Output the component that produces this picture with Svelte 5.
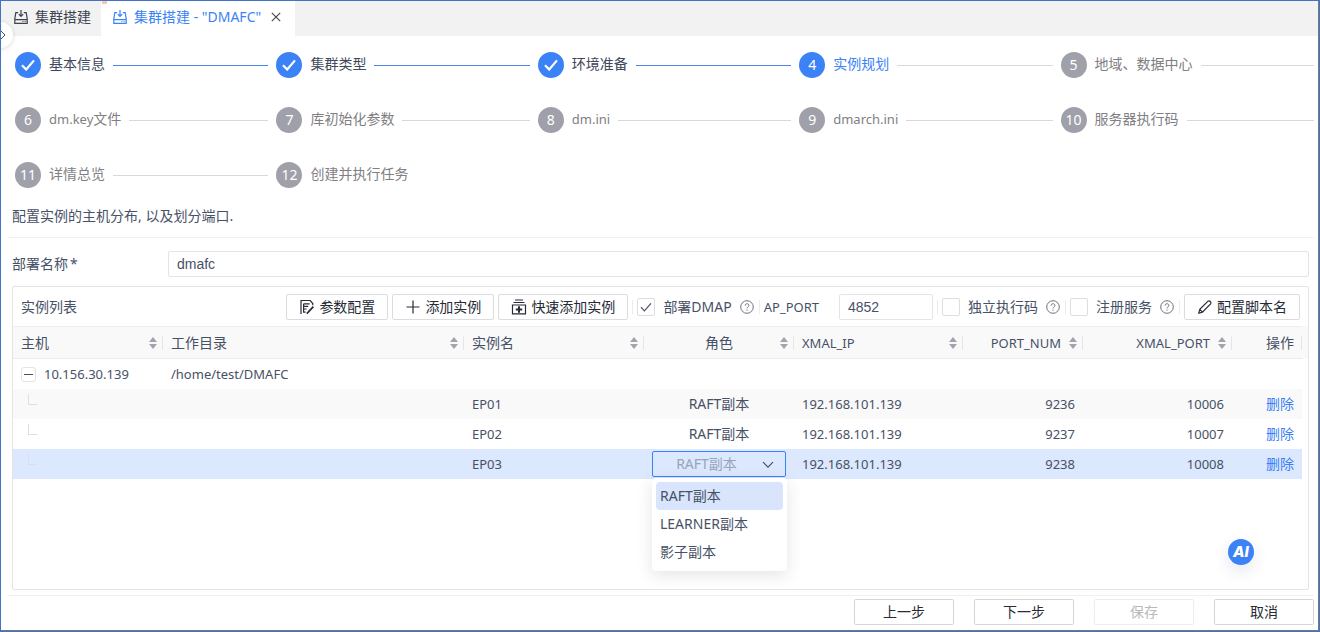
<script>
  const steps = [
    { label: '基本信息', state: 'done' },
    { label: '集群类型', state: 'done' },
    { label: '环境准备', state: 'done' },
    { label: '实例规划', state: 'current' },
    { label: '地域、数据中心', state: 'todo' },
    { prefix: 'dm.key', label: '文件', state: 'todo' },
    { label: '库初始化参数', state: 'todo' },
    { prefix: 'dm.ini', label: '', state: 'todo' },
    { prefix: 'dmarch.ini', label: '', state: 'todo' },
    { label: '服务器执行码', state: 'todo' },
    { label: '详情总览', state: 'todo' },
    { label: '创建并执行任务', state: 'todo' }
  ];

  const columns = [
    { label: '主机', cls: 'host', sort: true },
    { label: '工作目录', cls: 'dir', sort: true },
    { label: '实例名', cls: 'name', sort: true },
    { label: '角色', cls: 'role', sort: true },
    { label: 'XMAL_IP', cls: 'ip', sort: true, latin: true },
    { label: 'PORT_NUM', cls: 'port', sort: true, latin: true },
    { label: 'XMAL_PORT', cls: 'xport', sort: true, latin: true },
    { label: '操作', cls: 'op', sort: false }
  ];

  const roles = ['RAFT副本', 'LEARNER副本', '影子副本'];

  let rows = $state([
    { name: 'EP01', role: 'RAFT副本', ip: '192.168.101.139', port: 9236, xport: 10006 },
    { name: 'EP02', role: 'RAFT副本', ip: '192.168.101.139', port: 9237, xport: 10007 },
    { name: 'EP03', role: 'RAFT副本', ip: '192.168.101.139', port: 9238, xport: 10008 }
  ]);
  let editing = $state('EP03');
  let menuOpen = $state(true);
  let deployName = $state('dmafc');
  let apPort = $state('4852');
  let deployDmap = $state(true);
  let standalone = $state(false);
  let register = $state(false);

  function choose(row, role) {
    row.role = role;
    menuOpen = false;
  }

  function remove(event, name) {
    event.preventDefault();
    rows = rows.filter((r) => r.name !== name);
  }
</script>

{#snippet clusterIcon()}
  <svg class="tab-icon" viewBox="0 0 14 14" aria-hidden="true">
    <path d="M4.2 2.6H1.8L.8 8.8v4.5h12.4V8.8l-1-6.2H9.8M.8 9.6h12.4M7 0v6.2M4.8 4.2L7 6.4l2.2-2.2M8.4 11.5h1M10.6 11.5h1" />
  </svg>
{/snippet}

{#snippet help()}
  <svg class="help" viewBox="0 0 14 14" aria-hidden="true">
    <circle cx="7" cy="7" r="6.3" />
    <path d="M5.1 5.6c0-2.5 3.8-2.5 3.8-.1 0 1.4-1.9 1.4-1.9 2.9M7 9.6v1.1" />
  </svg>
{/snippet}

{#snippet tick()}
  <svg class="tick" viewBox="0 0 18 18" aria-hidden="true"><path d="M4 9.2l3.4 3.6L14 5.4" /></svg>
{/snippet}

<div class="frame">
  <div class="page">
    <nav class="tabs">
      <a class="tab" href="#cluster">{@render clusterIcon()}集群搭建</a>
      <a class="tab active" href="#dmafc">{@render clusterIcon()}集群搭建 - "DMAFC"</a>
      <button class="close" aria-label="关闭">
        <svg viewBox="0 0 10 10" aria-hidden="true"><path d="M.8.8l8.4 8.4M9.2.8L.8 9.2" /></svg>
      </button>
      <i class="mark"></i>
      <button class="expand" aria-label="展开">
        <svg viewBox="0 0 6 10" aria-hidden="true"><path d="M1 1l4 4-4 4" /></svg>
      </button>
    </nav>

    <ol class="steps">
      {#each steps as step, i}
        <li class={step.state}>
          <span class="dot">
            {#if step.state === 'done'}
              <svg viewBox="0 0 14 12" aria-hidden="true"><path d="M1 6.2l4.2 4.3L13 1.4" /></svg>
            {:else}{i + 1}{/if}
          </span>
          <span class="label">{#if step.prefix}<span class="latin">{step.prefix}</span>{/if}{step.label}</span>
          {#if i < steps.length - 1}<span class="line"></span>{/if}
        </li>
      {/each}
    </ol>

    <p class="intro">配置实例的主机分布, 以及划分端口.</p>

    <div class="field">
      <label for="deploy-name">部署名称<span class="star">*</span></label>
      <input id="deploy-name" type="text" bind:value={deployName} />
    </div>

    <section class="panel">
      <div class="toolbar">
        <h2>实例列表</h2>
        <button class="btn">
          <svg class="i16" viewBox="0 0 16 16" aria-hidden="true">
            <path d="M2 15V1.5h9.2l2.6 3v1.8M4.6 4.8h6M4.6 7.4h4.6M4.6 10h3M4.6 4.8v8.4h2" />
            <path class="mid" d="M14.4 7.6l-5.2 5.6-1.4 1.4" />
          </svg>参数配置
        </button>
        <button class="btn">
          <svg class="i16" viewBox="0 0 16 16" aria-hidden="true"><path d="M8 1.5v13M1.5 8h13" /></svg>添加实例
        </button>
        <button class="btn">
          <svg class="i16" viewBox="0 0 16 16" aria-hidden="true">
            <path d="M4 1h8M2.5 3.5h11M1.5 6h13v8.8h-13z" />
            <path class="thick" d="M8 7.3v6.4M4.8 10.5h6.4" />
          </svg>快速添加实例
        </button>
        <i class="sep"></i>
        <span class="check">
          <span class="box"><input id="dmap" type="checkbox" bind:checked={deployDmap} />{@render tick()}</span>
          <label for="dmap">部署DMAP</label>{@render help()}
        </span>
        <i class="sep"></i>
        <label class="port-label" for="ap-port">AP_PORT</label>
        <input id="ap-port" type="text" bind:value={apPort} />
        <i class="sep"></i>
        <span class="check">
          <span class="box"><input id="standalone" type="checkbox" bind:checked={standalone} />{@render tick()}</span>
          <label for="standalone">独立执行码</label>{@render help()}
        </span>
        <i class="sep"></i>
        <span class="check">
          <span class="box"><input id="register" type="checkbox" bind:checked={register} />{@render tick()}</span>
          <label for="register">注册服务</label>{@render help()}
        </span>
        <i class="sep"></i>
        <button class="btn">
          <svg class="i16" viewBox="0 0 16 16" aria-hidden="true">
            <path d="M1.8 14.2l1-3.8L11 2.2c1.4-1.2 3.8 1 2.6 2.6l-8.2 8.3zM2.8 10.4l2.6 2.7" />
          </svg>配置脚本名
        </button>
      </div>

      <div class="table-wrap">
        <table>
          <colgroup>
            {#each columns as c}<col class={c.cls} />{/each}
          </colgroup>
          <thead>
            <tr>
              {#each columns as c}
                <th class={c.cls} scope="col">
                  <div class="head">
                    <span class:latin={c.latin}>{c.label}</span>
                    {#if c.sort}
                      <svg class="sort" viewBox="0 0 8 12" aria-hidden="true"><path d="M4 0l4 5H0zM4 12l4-5H0z" /></svg>
                    {/if}
                  </div>
                </th>
              {/each}
            </tr>
          </thead>
          <tbody>
            <tr>
              <td class="latin">
                <div class="tree">
                  <button class="toggle" aria-label="折叠"></button>10.156.30.139
                </div>
              </td>
              <td class="latin">/home/test/DMAFC</td>
              <td></td><td></td><td></td><td></td><td></td><td></td>
            </tr>
            {#each rows as row, i}
              <tr class:striped={i % 2 === 0} class:selected={row.name === editing}>
                <td><i class="branch"></i></td>
                <td></td>
                <td class="latin">{row.name}</td>
                <td class="role">
                  {#if row.name === editing}
                    <div class="picker">
                      <select aria-label="角色" bind:value={row.role}>
                        {#each roles as role}<option>{role}</option>{/each}
                      </select>
                      <svg class="chevron" viewBox="0 0 12 8" aria-hidden="true"><path d="M1 1.2l5 5 5-5" /></svg>
                      {#if menuOpen}
                        <div class="menu">
                          {#each roles as role}
                            <button class:on={role === row.role} onclick={() => choose(row, role)}>{role}</button>
                          {/each}
                        </div>
                      {/if}
                    </div>
                  {:else}{row.role}{/if}
                </td>
                <td class="latin">{row.ip}</td>
                <td class="latin num">{row.port}</td>
                <td class="latin num">{row.xport}</td>
                <td class="num"><a href="#delete" onclick={(e) => remove(e, row.name)}>删除</a></td>
              </tr>
            {/each}
          </tbody>
        </table>
      </div>
    </section>

    <footer>
      <button>上一步</button>
      <button>下一步</button>
      <button disabled>保存</button>
      <button>取消</button>
    </footer>

    <button class="ai">AI</button>
  </div>
</div>

<style>
  :global(body) {
    margin: 0;
  }
  .frame,
  .frame * {
    box-sizing: border-box;
  }
  .frame {
    display: flex;
    min-height: 100vh;
    border: 1px solid #4472c4;
    font: 14px/20px 'Noto Sans', 'Noto Sans CJK SC', sans-serif;
    color: #475166;
    background: #fff;
  }
  .page {
    position: relative;
    flex: 1;
    min-width: 0;
    display: flex;
    flex-direction: column;
    border-right: 1px solid #77777c;
    border-bottom: 1px solid #77777c;
    overflow: hidden;
  }
  button,
  input,
  select {
    font: inherit;
    color: inherit;
    margin: 0;
  }
  button {
    cursor: pointer;
  }
  svg {
    flex: none;
    fill: none;
    stroke: currentColor;
  }
  a {
    color: #3b7ff8;
    text-decoration: none;
  }
  .latin {
    font-size: 13px;
  }

  .tabs {
    position: relative;
    display: flex;
    height: 35px;
    padding-left: 2px;
    background: #f2f2f2;
  }
  .tab {
    display: flex;
    align-items: center;
    gap: 7px;
    padding: 0 10px 4px 11px;
    color: #3c4250;
  }
  .tab.active {
    padding-left: 12px;
    background: #fff;
    color: #3b82f6;
  }
  .tab-icon {
    width: 14px;
    height: 14px;
    stroke-width: 1.2;
  }
  .close {
    display: flex;
    align-items: center;
    padding: 0 14px 4px 0;
    border: 0;
    background: #fff;
  }
  .close svg {
    width: 10px;
    height: 10px;
    stroke: #444;
    stroke-width: 1.1;
  }
  .mark {
    position: absolute;
    left: 101px;
    top: 0;
    width: 5px;
    height: 3px;
    background: #f8c4b4;
  }
  .expand {
    position: absolute;
    left: -14px;
    top: 21px;
    width: 26px;
    height: 26px;
    padding: 0 0 0 13px;
    display: flex;
    align-items: center;
    border: 0;
    border-radius: 50%;
    background: #fff;
    box-shadow: 0 1px 5px rgba(0, 0, 0, 0.14);
  }
  .expand svg {
    width: 6px;
    height: 10px;
  }

  .steps {
    display: grid;
    grid-template-columns: repeat(5, minmax(0, 1fr));
    gap: 29px 8px;
    margin: 0;
    padding: 16px 4px 0 14px;
    list-style: none;
  }
  .steps li {
    display: flex;
    align-items: center;
    gap: 8px;
    height: 26px;
    color: #808084;
    white-space: nowrap;
  }
  .dot {
    flex: none;
    display: grid;
    place-items: center;
    width: 26px;
    height: 26px;
    border-radius: 50%;
    background: #a0a0aa;
    color: #fff;
    font-size: 14px;
  }
  .dot svg {
    width: 14px;
    height: 12px;
    stroke-width: 2.2;
  }
  .label {
    padding-bottom: 2px;
  }
  .line {
    flex: 1;
    height: 1px;
    background: #d9d9d9;
  }
  .done .dot,
  .current .dot {
    background: #3b82f6;
  }
  .steps .done {
    color: #40485a;
  }
  .steps .current {
    color: #3b82f6;
  }
  .done .line {
    background: #4a88f0;
  }

  .intro {
    margin: 18px 4px 0 6px;
    padding: 0 5px 11px;
    border-bottom: 1px solid #f0f0f0;
  }
  .field {
    display: flex;
    align-items: center;
    margin: 13px 9px 9px 11px;
  }
  .field label {
    flex: none;
    width: 156px;
  }
  .star {
    padding-left: 2px;
  }
  input[type='text'] {
    height: 26px;
    padding: 0 8px;
    border: 1px solid #e4e4e7;
    border-radius: 2px;
    background: #fff;
    font-family: 'Liberation Sans', Arial, sans-serif;
    outline: none;
  }
  .field input {
    flex: 1;
    min-width: 0;
  }

  .panel {
    flex: 1;
    display: flex;
    flex-direction: column;
    margin: 0 9px 0 11px;
    border: 1px solid #e4e4e7;
    border-radius: 2px;
  }
  .toolbar {
    display: flex;
    align-items: center;
    gap: 4px;
    height: 39px;
    padding: 0 8px;
    white-space: nowrap;
  }
  h2 {
    margin: 0 auto 0 0;
    font-size: 14px;
    font-weight: 400;
  }
  .btn {
    display: flex;
    align-items: center;
    gap: 4px;
    height: 26px;
    padding: 0 12px;
    border: 1px solid #dcdcde;
    border-radius: 2px;
    background: #fff;
    color: #262b36;
  }
  .i16 {
    width: 16px;
    height: 16px;
    stroke-width: 1.2;
  }
  .mid {
    stroke-width: 1.7;
  }
  .thick {
    stroke-width: 2;
  }
  .sep {
    width: 1px;
    height: 14px;
    background: #ececee;
  }
  .check {
    display: flex;
    align-items: center;
    gap: 8px;
    padding-right: 1px;
  }
  .box {
    display: grid;
    width: 18px;
    height: 18px;
  }
  .box input,
  .tick {
    grid-area: 1 / 1;
    width: 18px;
    height: 18px;
  }
  .box input {
    appearance: none;
    border: 1px solid #dedee2;
    border-radius: 2px;
    background: #fff;
  }
  .tick {
    visibility: hidden;
    pointer-events: none;
    stroke-width: 1.2;
  }
  .box input:checked + .tick {
    visibility: visible;
  }
  .help {
    width: 14px;
    height: 14px;
    stroke: #6b7280;
    stroke-width: 1;
  }
  .port-label {
    padding-right: 16px;
    font-size: 13px;
  }
  #ap-port {
    width: 94px;
  }

  .table-wrap {
    flex: 1;
    padding-right: 6px;
    overflow: hidden;
  }
  table {
    width: 100%;
    table-layout: fixed;
    border-collapse: separate;
    border-spacing: 0;
  }
  col.host,
  col.role {
    width: 150px;
  }
  col.xport {
    width: 149px;
  }
  col.name {
    width: 180px;
  }
  col.ip {
    width: 169px;
  }
  col.port {
    width: 120px;
  }
  col.op {
    width: 70px;
  }
  th {
    height: 33px;
    padding: 0;
    border-top: 1px solid #efefef;
    border-bottom: 1px solid #ececec;
    background: #f9f9f9;
    font-weight: 400;
    text-align: left;
  }
  th.op {
    box-shadow: 6px 0 0 #f9f9f9;
  }
  .head {
    display: flex;
    align-items: center;
    gap: 8px;
    height: 14px;
    padding: 0 5px 0 8px;
    border-right: 1px solid #e6e6e8;
  }
  .head span {
    flex: 1;
  }
  th.role .head span {
    padding-left: 14px;
    text-align: center;
  }
  th.port .head span,
  th.xport .head span {
    text-align: right;
  }
  th.op .head {
    padding-right: 7px;
    text-align: right;
  }
  .sort {
    width: 8px;
    height: 12px;
    fill: #a3a3ad;
    stroke: none;
  }
  td {
    height: 30px;
    padding: 0 8px;
    white-space: nowrap;
  }
  td.role {
    padding: 0;
    text-align: center;
  }
  td.num {
    text-align: right;
  }
  .striped td {
    background: #f9f9f9;
  }
  .selected td {
    background: #dbe8fd;
  }
  .tree {
    display: flex;
    align-items: center;
    gap: 8px;
  }
  .toggle {
    display: grid;
    place-items: center;
    width: 15px;
    height: 15px;
    padding: 0;
    border: 1px solid #e4e4e7;
    border-radius: 3px;
    background: #fff;
  }
  .toggle::before {
    content: '';
    width: 9px;
    height: 1px;
    background: #475166;
  }
  .branch {
    display: block;
    width: 9px;
    height: 11px;
    margin: 0 0 9px 7px;
    border: solid #dcdfe4;
    border-width: 0 0 1px 1px;
  }
  .picker {
    position: relative;
    display: grid;
    margin: 0 8px;
  }
  select {
    appearance: none;
    height: 26px;
    padding: 0 25px 0 0;
    border: 1px solid #3b82f6;
    border-radius: 2px;
    background: transparent;
    color: #98a4b8;
    text-align: center;
    text-align-last: center;
    outline: none;
  }
  .chevron {
    position: absolute;
    right: 12px;
    top: 10px;
    width: 12px;
    height: 8px;
    stroke-width: 1.2;
    pointer-events: none;
  }
  .menu {
    position: absolute;
    z-index: 2;
    top: 27px;
    left: 0;
    right: -1px;
    display: grid;
    padding: 4px 4px 5px;
    border-radius: 4px;
    background: #fff;
    box-shadow: 0 4px 16px rgba(40, 50, 80, 0.13);
  }
  .menu button {
    height: 28px;
    padding: 0 4px;
    border: 0;
    border-radius: 4px;
    background: #fff;
    text-align: left;
  }
  .menu .on {
    background: #d8e5fd;
  }

  footer {
    display: flex;
    justify-content: flex-end;
    gap: 20px;
    margin: 5px 4px 0 6px;
    padding: 3px 0 5px;
    border-top: 1px solid #f0f0f0;
  }
  footer button {
    width: 100px;
    height: 26px;
    padding: 0;
    border: 1px solid #d6d6d8;
    border-radius: 2px;
    background: #fff;
    color: #262b36;
  }
  footer button:disabled {
    border-color: #ededee;
    color: #b8b8b8;
  }
  .ai {
    position: absolute;
    right: 64px;
    bottom: 65px;
    width: 26px;
    height: 26px;
    padding: 0;
    border: 0;
    border-radius: 50%;
    background: #3b82f6;
    color: #fff;
    font: italic 800 15px/26px Inter, sans-serif;
    box-shadow: 0 6px 16px rgba(40, 60, 110, 0.12);
  }
</style>
